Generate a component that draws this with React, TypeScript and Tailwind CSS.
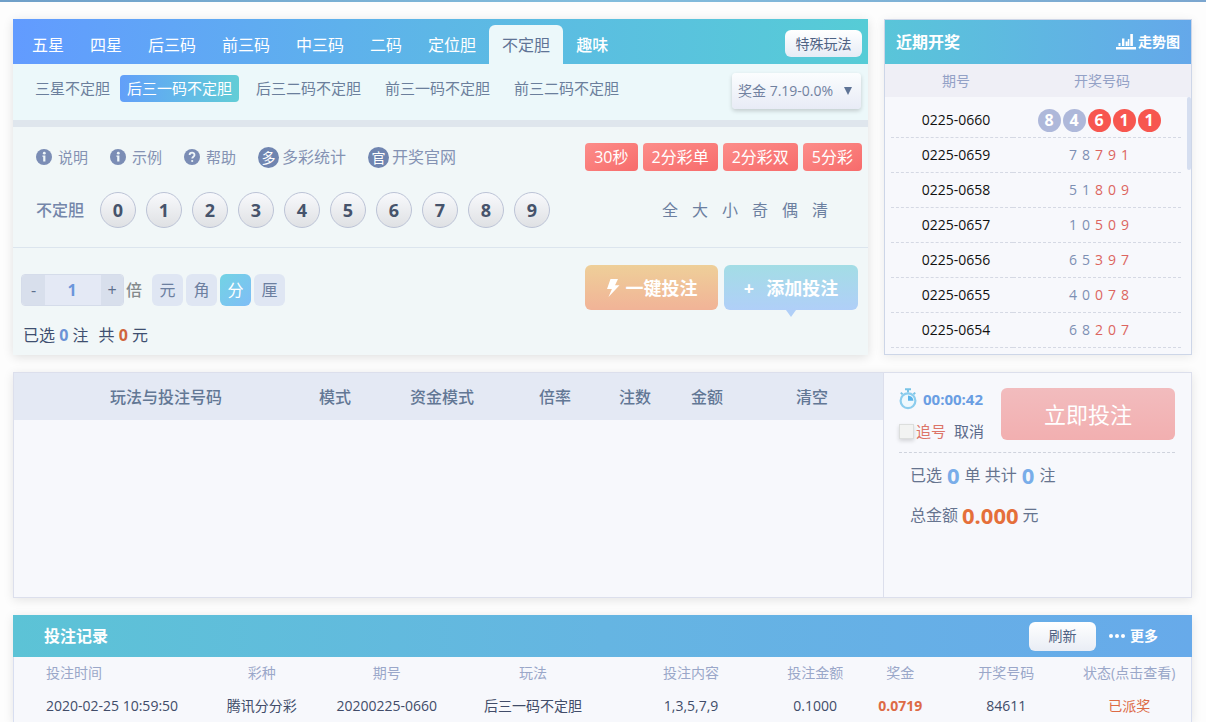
import { useState } from 'react';

const tabs = ['五星', '四星', '后三码', '前三码', '中三码', '二码', '定位胆', '不定胆', '趣味'];
const subTabs = ['三星不定胆', '后三一码不定胆', '后三二码不定胆', '前三一码不定胆', '前三二码不定胆'];
const relatedGames = ['30秒', '2分彩单', '2分彩双', '5分彩'];
const digits = ['0', '1', '2', '3', '4', '5', '6', '7', '8', '9'];
const quickPicks = ['全', '大', '小', '奇', '偶', '清'];
const units = ['元', '角', '分', '厘'];

const draws = [
  { issue: '0225-0660', code: '84611' },
  { issue: '0225-0659', code: '78791' },
  { issue: '0225-0658', code: '51809' },
  { issue: '0225-0657', code: '10509' },
  { issue: '0225-0656', code: '65397' },
  { issue: '0225-0655', code: '40078' },
  { issue: '0225-0654', code: '68207' },
];

const InfoIcon = () => (
  <svg viewBox="0 0 16 16" className="w-4 h-4" aria-hidden="true">
    <circle cx="8" cy="8" r="8" fill="#7b8db5" />
    <circle cx="8.3" cy="4.2" r="1.4" fill="#eef5f8" />
    <path d="M6.4 6.6h3v6H7.2V7.8h-.8z" fill="#eef5f8" />
  </svg>
);

const HelpIcon = () => (
  <svg viewBox="0 0 16 16" className="w-4 h-4" aria-hidden="true">
    <circle cx="8" cy="8" r="8" fill="#7b8db5" />
    <path d="M5.6 6.1c0-3.2 4.9-3.1 4.9-.2 0 1.8-2.3 1.9-2.3 3.7" fill="none" stroke="#eef5f8" strokeWidth="1.8" />
    <circle cx="8.2" cy="12" r="1.1" fill="#eef5f8" />
  </svg>
);

const TrendIcon = () => (
  <svg viewBox="0 0 20 16" className="w-5 h-4" fill="#fff" aria-hidden="true">
    <path d="M0 13h20v2.5H0zM2.5 9h2v3h-2zM6 4.5h2.4V12H6zM9.6 7.5h2V12h-2zM11.8 5h1.6v7h-1.6zM14.3 0h2.6v12h-2.6z" />
  </svg>
);

const StopwatchIcon = () => (
  <svg viewBox="0 0 18 22" className="w-[18px] h-[22px]" fill="none" aria-hidden="true">
    <path d="M6 1.3h6M9 1.5v3M1.8 4.6l1.8 1.8M16.2 4.6l-1.8 1.8" stroke="#79c3e6" strokeWidth="2" />
    <circle cx="9" cy="12.8" r="7.4" stroke="#8ccdee" strokeWidth="2.2" fill="#eef8fd" />
    <path d="M9 12.8V7.4a5.4 5.4 0 0 1 5.4 5.4z" fill="#5cb4ea" />
  </svg>
);

const BoltIcon = () => (
  <svg viewBox="0 0 14 18" className="w-[14px] h-[18px]" fill="#fff" aria-hidden="true">
    <path d="M4.5 0H12L9 6.2h4.5L2.5 18l3.4-8H1z" />
  </svg>
);

const BetPanel = () => {
  const [unit, setUnit] = useState('分');
  const [times, setTimes] = useState(1);

  return (
    <section className="flex-1 min-w-0 bg-[#f1f7f8] shadow-[0_2px_10px_rgba(0,0,0,0.12)]">
      <div className="flex items-end justify-between h-[45px] pl-1.5 pr-1.5 bg-linear-to-r from-[#629bff] via-[#5db7e6] to-[#56ccd6]">
        <nav className="flex items-end">
          {tabs.map((tab) => (
            <a
              key={tab}
              href="#"
              className={
                tab === '不定胆'
                  ? 'h-[39px] leading-[40px] px-[13px] rounded-t-md bg-[#ecf8fa] text-base text-[#5f7496]'
                  : 'h-[39px] leading-[40px] px-[13px] text-base text-white last:font-medium'
              }
            >
              {tab}
            </a>
          ))}
        </nav>
        <button className="mb-[7px] h-[27px] w-[77px] rounded-md bg-linear-to-b from-white to-[#e6ecf6] text-sm text-[#4f6283]">
          特殊玩法
        </button>
      </div>

      <div className="flex justify-between h-[56px] pl-[15px] pr-[7px] bg-[#ecf8fa]">
        <nav className="flex gap-[10px] pt-[11px]">
          {subTabs.map((tab) => (
            <a
              key={tab}
              href="#"
              className={
                tab === '后三一码不定胆'
                  ? 'h-[27px] leading-[27px] px-[7px] rounded-sm bg-linear-to-r from-[#629ff9] to-[#62cdd6] text-[15px] text-white'
                  : 'h-[27px] leading-[27px] px-[7px] first:pr-0 text-[15px] text-[#6b7f9c]'
              }
            >
              {tab}
            </a>
          ))}
        </nav>
        <div className="relative mt-[9px] h-9 w-[129px]">
          <select
            aria-label="奖金"
            className="appearance-none w-full h-full pl-1.5 rounded-sm bg-linear-to-b from-[#fbfdfe] to-[#e8ebf6] shadow-[0_2px_4px_rgba(0,0,0,0.18)] text-sm text-[#7181a0]"
          >
            <option>奖金 7.19-0.0%</option>
          </select>
          <svg viewBox="0 0 8 8" className="absolute right-[9px] top-[14px] w-2 h-2 pointer-events-none" aria-hidden="true">
            <path d="M0 0h8L4 8z" fill="#5f7496" />
          </svg>
        </div>
      </div>
      <div className="h-[7px] bg-[#dfe6ed]" />

      <div className="flex items-center justify-between pt-4 pl-[23px] pr-1.5">
        <div className="flex items-center gap-[22px] text-[#8492b3]">
          <a href="#" className="flex items-center gap-1.5 text-[15px]"><InfoIcon />说明</a>
          <a href="#" className="flex items-center gap-1.5 text-[15px]"><InfoIcon />示例</a>
          <a href="#" className="flex items-center gap-1.5 text-[15px]"><HelpIcon />帮助</a>
          <a href="#" className="flex items-center gap-[3px] text-base">
            <span className="w-[21px] h-[21px] rounded-full bg-[#7085b0] text-white text-sm leading-[21px] text-center">多</span>
            多彩统计
          </a>
          <a href="#" className="flex items-center gap-[3px] text-base">
            <span className="w-[21px] h-[21px] rounded-full bg-[#7085b0] text-white text-sm leading-[21px] text-center">官</span>
            开奖官网
          </a>
        </div>
        <div className="flex gap-[5px]">
          {relatedGames.map((game) => (
            <a
              key={game}
              href="#"
              className="h-7 leading-7 px-[9px] rounded-sm bg-linear-to-br from-[#fc8d8a] to-[#f76b6b] text-base text-white"
            >
              {game}
            </a>
          ))}
        </div>
      </div>

      <div className="flex items-center justify-between mt-[21px] pb-[19px] pl-[23px] pr-10 border-b border-[#dce5ee]">
        <div className="flex items-center">
          <span className="w-16 text-base font-medium text-[#7486aa]">不定胆</span>
          <div className="flex gap-[10px]">
            {digits.map((d) => (
              <button
                key={d}
                className="w-9 h-9 rounded-full border border-[#bcc3d6] bg-linear-to-b from-[#f8f9fc] to-[#dfe1e4] text-lg leading-none font-bold text-[#46536b]"
              >
                {d}
              </button>
            ))}
          </div>
        </div>
        <div className="flex gap-[14px] text-base text-[#6c7fa0]">
          {quickPicks.map((q) => (
            <button key={q}>{q}</button>
          ))}
        </div>
      </div>

      <div className="flex justify-between items-start pt-[17px] pb-[6px] pl-2 pr-[10px]">
        <div className="pt-[9px]">
          <div className="flex items-center">
            <div className="flex h-8 rounded-sm overflow-hidden border border-[#d5dcea]">
              <button aria-label="减少" onClick={() => setTimes(Math.max(1, times - 1))} className="w-[23px] bg-[#d8dfec] text-base text-[#5d6f8c]">-</button>
              <input
                aria-label="倍数"
                value={times}
                onChange={(e) => setTimes(Number(e.target.value) || 1)}
                className="w-14 pr-0.5 bg-[#e4e9f5] text-center text-base font-bold text-[#6b96db]"
              />
              <button aria-label="增加" onClick={() => setTimes(times + 1)} className="w-[22px] bg-[#d8dfec] text-base text-[#5d6f8c]">+</button>
            </div>
            <span className="ml-0.5 text-base font-medium text-[#848a8c]">倍</span>
            <div className="flex gap-[3px] ml-[10px]">
              {units.map((u) => (
                <button
                  key={u}
                  onClick={() => setUnit(u)}
                  className={
                    u === unit
                      ? 'w-[31px] h-8 rounded-md bg-linear-to-br from-[#72d3e4] to-[#7fbdf6] text-base text-white'
                      : 'w-[31px] h-8 rounded-md bg-[#dfe6f3] text-base text-[#6c7fa0]'
                  }
                >
                  {u}
                </button>
              ))}
            </div>
          </div>
          <p className="mt-[17px] pl-0.5 text-base text-[#3f4f70]">
            已选 <b className="text-[#6b93d6]">0</b> 注<span className="ml-2.5">共 <b className="text-[#d0653c]">0</b> 元</span>
          </p>
        </div>
        <div className="flex gap-1.5">
          <button className="flex items-center justify-center gap-1.5 w-[133px] h-[45px] rounded-md bg-linear-to-b from-[#eecf99] to-[#f1b397] text-lg font-bold text-white">
            <BoltIcon />一键投注
          </button>
          <button className="relative flex items-center justify-center gap-3 w-[134px] h-[45px] rounded-md bg-linear-to-b from-[#a3dde5] to-[#b0cff8] text-lg font-bold text-white">
            <span>+</span>添加投注
            <svg viewBox="0 0 10 7" className="absolute left-1/2 top-full -ml-[5px] w-[10px] h-[7px]" aria-hidden="true">
              <path d="M0 0h10L5 7z" fill="#b0cff8" />
            </svg>
          </button>
        </div>
      </div>
    </section>
  );
};

const RecentDraws = () => (
  <section className="w-[308px] shrink-0 pb-[6px] border border-[#cdd6e8] bg-[#f7f8fc] shadow-[0_2px_10px_rgba(0,0,0,0.08)]">
    <div className="flex items-center justify-between h-11 pl-[11px] pr-[11px] bg-linear-to-r from-[#59c5d9] to-[#64a8ea] text-white">
      <h2 className="text-base font-bold">近期开奖</h2>
      <a href="#" className="flex items-center gap-0.5 text-sm font-bold"><TrendIcon />走势图</a>
    </div>
    <div className="relative">
      <table className="w-full table-fixed text-sm">
        <colgroup>
          <col className="w-[128px]" />
          <col />
        </colgroup>
        <thead>
          <tr className="h-[33px] bg-[#efeff6] text-[#93a1c6]">
            <th className="pl-3.5 font-normal">期号</th>
            <th className="font-normal">开奖号码</th>
          </tr>
        </thead>
        <tbody>
          {draws.map(({ issue, code }, i) => (
            <tr key={issue}>
              <td className={i === 0 ? 'pt-[6px]' : ''}>
                <div className="ml-1.5 pl-2 h-[35px] leading-[34px] border-b border-dashed border-[#d5d9e4] text-center text-[#111]">{issue}</div>
              </td>
              <td className={i === 0 ? 'pt-[6px]' : ''}>
                <div
                  className={
                    i === 0
                      ? 'mr-2.5 pl-1 h-[35px] flex items-center justify-center gap-0.5 border-b border-dashed border-[#d5d9e4]'
                      : 'mr-2.5 pl-1 h-[35px] flex items-center justify-center gap-[5px] border-b border-dashed border-[#d5d9e4]'
                  }
                >
                  {code.split('').map((n, j) =>
                    i === 0 ? (
                      <span
                        key={j}
                        className={
                          j < 2
                            ? 'w-[23px] h-[23px] rounded-full bg-[#aeb8da] text-center text-base leading-[23px] font-bold text-white'
                            : 'w-[23px] h-[23px] rounded-full bg-[#f7564f] text-center text-base leading-[23px] font-bold text-white'
                        }
                      >
                        {n}
                      </span>
                    ) : (
                      <span key={j} className={j < 2 ? 'text-[#7d8fb3]' : 'text-[#dc6560]'}>{n}</span>
                    )
                  )}
                </div>
              </td>
            </tr>
          ))}
        </tbody>
      </table>
      <div className="absolute right-0 top-[33px] w-1 h-[73px] rounded-sm bg-[#d5def0]" />
    </div>
  </section>
);

const Cart = () => (
  <section className="flex min-h-[226px] border border-[#dcdfec] bg-[#f7f8fc] shadow-[0_2px_10px_rgba(0,0,0,0.1)]">
    <div className="flex-1 min-w-0">
      <table className="w-full table-fixed">
        <colgroup>
          <col className="w-[286px]" />
          <col className="w-[70px]" />
          <col className="w-[144px]" />
          <col className="w-[82px]" />
          <col className="w-[78px]" />
          <col className="w-[66px]" />
          <col className="w-[144px]" />
        </colgroup>
        <thead>
          <tr className="h-[47px] bg-[#e4e9f4] text-base text-[#627794]">
            <th className="pl-[18px] font-medium">玩法与投注号码</th>
            <th className="font-medium">模式</th>
            <th className="font-medium">资金模式</th>
            <th className="font-medium">倍率</th>
            <th className="font-medium">注数</th>
            <th className="font-medium">金额</th>
            <th className="font-medium">清空</th>
          </tr>
        </thead>
      </table>
    </div>
    <div className="w-[308px] shrink-0 border-l border-[#dcdfec] pl-[15px] pr-4 pt-[15px]">
      <div className="flex justify-between pb-2.5 border-b border-dashed border-[#cfd3dd]">
        <div>
          <div className="flex items-center gap-1.5 text-[15px] leading-[22px] font-bold text-[#6a9ee3]">
            <StopwatchIcon />00:00:42
          </div>
          <div className="flex items-center mt-2.5 text-[15px] leading-[22px]">
            <label className="flex items-center gap-0.5 text-[#dc7468]">
              <input type="checkbox" className="appearance-none w-[15px] h-[15px] border border-[#dcdedd] bg-[#f2f3f2] shadow-[0_2px_4px_rgba(0,0,0,0.15)] checked:bg-[#dc7468]" />
              追号
            </label>
            <button className="ml-2 text-[#5c6a8a]">取消</button>
          </div>
        </div>
        <button className="w-[174px] h-[52px] rounded-md bg-linear-to-b from-[#f2bcbe] to-[#f2afb0] text-[22px] text-white">
          立即投注
        </button>
      </div>
      <p className="flex items-center gap-[5px] mt-1.5 pl-[11px] h-8 text-base text-[#66748f]">
        已选 <b className="text-[22px] text-[#79ade9]">0</b> 单 共计 <b className="text-[22px] text-[#79ade9]">0</b> 注
      </p>
      <p className="flex items-center gap-1 mt-2 pl-[11px] h-8 text-base text-[#66748f]">
        总金额 <b className="text-[22px] text-[#e56f3a]">0.000</b> 元
      </p>
    </div>
  </section>
);

const BetHistory = () => (
  <section className="bg-[#f7f8fc] shadow-[0_2px_10px_rgba(0,0,0,0.1)]">
    <div className="flex items-center justify-between h-[42px] pl-[31px] pr-[34px] bg-linear-to-r from-[#5cc3d6] via-[#65b5e2] to-[#67aaea] text-white">
      <h2 className="text-base font-bold">投注记录</h2>
      <div className="flex items-center gap-[13px]">
        <button className="w-[67px] h-[29px] rounded-md bg-linear-to-b from-white to-[#e9edf5] text-sm text-[#4f6283]">刷新</button>
        <a href="#" className="flex items-center gap-[5px] text-sm font-bold">
          <svg viewBox="0 0 16 4" className="w-4 h-1" fill="#fff" aria-hidden="true">
            <circle cx="2" cy="2" r="2" />
            <circle cx="8" cy="2" r="2" />
            <circle cx="14" cy="2" r="2" />
          </svg>
          更多
        </a>
      </div>
    </div>
    <table className="w-full table-fixed border-x border-[#d8def0] text-sm text-center">
      <colgroup>
        <col className="w-[195px]" />
        <col className="w-[106px]" />
        <col className="w-[144px]" />
        <col className="w-[148px]" />
        <col className="w-[168px]" />
        <col className="w-[80px]" />
        <col className="w-[90px]" />
        <col className="w-[122px]" />
        <col className="w-[124px]" />
      </colgroup>
      <thead>
        <tr className="h-8 whitespace-nowrap text-[#9aa7c9]">
          <th className="pl-8 text-left font-normal">投注时间</th>
          <th className="font-normal">彩种</th>
          <th className="font-normal">期号</th>
          <th className="font-normal">玩法</th>
          <th className="font-normal">投注内容</th>
          <th className="font-normal">投注金额</th>
          <th className="font-normal">奖金</th>
          <th className="font-normal">开奖号码</th>
          <th className="font-normal">状态(点击查看)</th>
        </tr>
      </thead>
      <tbody>
        <tr className="h-[33px] whitespace-nowrap text-[#414c69]">
          <td className="pl-8 text-left">2020-02-25 10:59:50</td>
          <td>腾讯分分彩</td>
          <td>20200225-0660</td>
          <td>后三一码不定胆</td>
          <td>1,3,5,7,9</td>
          <td>0.1000</td>
          <td className="font-bold text-[#dd6a45]">0.0719</td>
          <td>84611</td>
          <td><a href="#" className="text-[#dd6a45]">已派奖</a></td>
        </tr>
      </tbody>
    </table>
  </section>
);

const App = () => (
  <div className="bg-[#fdfdfd] font-['Open_Sans','Noto_Sans_CJK_SC',sans-serif]">
    <div className="h-0.5 bg-linear-to-r from-[#6f9fc8] via-[#82bddd] to-[#7ba6cf]" />
    <main className="flex flex-col gap-[17px] pt-[17px] pl-[13px] pr-[14px]">
      <div className="flex gap-4">
        <BetPanel />
        <RecentDraws />
      </div>
      <Cart />
      <BetHistory />
    </main>
  </div>
);

export default App;
